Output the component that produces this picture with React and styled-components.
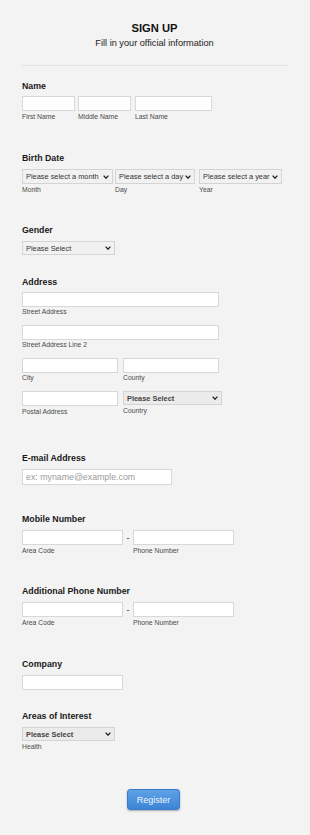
import React from "react";
import styled, { createGlobalStyle } from "styled-components";

const GlobalStyle = createGlobalStyle`
  html, body {
    margin: 0;
    padding: 0;
    background: #f3f3f3;
  }
  body {
    font-family: "Liberation Sans", Arial, sans-serif;
    color: #222;
  }
`;

const Page = styled.div`
  width: 310px;
  min-height: 835px;
  box-sizing: border-box;
  padding: 0 23px 0 22px;
  background: #f3f3f3;
`;

const Header = styled.div`
  display: flex;
  flex-direction: column;
  align-items: center;
  padding-top: 21px;
`;

const Title = styled.div`
  font-size: 11.2px;
  line-height: 14px;
  font-weight: bold;
  color: #111;
`;

const Subtitle = styled.div`
  margin-top: 2px;
  font-size: 9.2px;
  line-height: 12px;
  color: #222;
`;

const Divider = styled.div`
  margin-top: 16px;
  height: 1px;
  background: #e2e2e2;
`;

const Section = styled.div`
  margin-top: ${(p) => p.gap}px;
  display: flex;
  flex-direction: column;
  align-items: flex-start;
`;

const Heading = styled.div`
  font-size: 8.8px;
  line-height: 12px;
  font-weight: bold;
  color: #1a1a1a;
  margin-bottom: ${(p) => (p.mb !== undefined ? p.mb : 4)}px;
`;

const Row = styled.div`
  display: flex;
  align-items: flex-start;
  gap: ${(p) => p.gap || 0}px;
  margin-bottom: ${(p) => p.mb || 0}px;
`;

const Field = styled.div`
  display: flex;
  flex-direction: column;
  width: ${(p) => p.w}px;
`;

const Input = styled.input`
  display: block;
  box-sizing: border-box;
  width: ${(p) => p.w}px;
  height: ${(p) => p.h || 15}px;
  margin: 0;
  padding: 0 3px;
  border: 1px solid #d8d8d8;
  border-radius: 0;
  background: #fff;
  font-family: "Liberation Sans", Arial, sans-serif;
  font-size: 8.8px;
  color: #333;
  outline: none;
  &::placeholder {
    color: #9a9a9a;
  }
`;

const SelectWrap = styled.div`
  position: relative;
  width: ${(p) => p.w}px;
  height: ${(p) => p.h || 15}px;
`;

const Select = styled.select`
  display: block;
  appearance: none;
  -webkit-appearance: none;
  box-sizing: border-box;
  width: 100%;
  height: 100%;
  margin: 0;
  padding: 0 10px 0 3px;
  border: 1px solid #d4d4d4;
  border-radius: 0;
  background-color: ${(p) => (p.dark ? "#ebebeb" : "#f1f1f1")};
  font-family: "Liberation Sans", Arial, sans-serif;
  font-size: 7.4px;
  line-height: normal;
  font-weight: ${(p) => (p.dark ? "bold" : "normal")};
  color: ${(p) => (p.dark ? "#444" : "#333")};
  outline: none;
`;

const Chevron = styled.svg`
  position: absolute;
  right: 4px;
  top: 50%;
  margin-top: -2px;
  width: 6px;
  height: 4px;
  pointer-events: none;
`;

const Sub = styled.div`
  margin-top: ${(p) => (p.mt !== undefined ? p.mt : 1)}px;
  font-size: 6.8px;
  line-height: 9px;
  color: #4a4a4a;
  white-space: nowrap;
`;

const Spacer = styled.div`
  width: ${(p) => p.w}px;
  flex: none;
`;

const Dash = styled.div`
  width: 10px;
  height: 15px;
  display: flex;
  align-items: center;
  justify-content: center;
  font-size: 9px;
  color: #333;
`;

const ButtonRow = styled.div`
  display: flex;
  justify-content: center;
  margin-top: 38px;
  padding-right: 2px;
`;

const Button = styled.button`
  width: 53px;
  height: 21px;
  padding: 0;
  border: 1px solid #3a7cc8;
  border-radius: 3px;
  background: linear-gradient(#5ea2e6, #3c84d6);
  box-shadow: 0 1px 2px rgba(0, 0, 0, 0.3);
  color: #eef5fd;
  font-family: "Liberation Sans", Arial, sans-serif;
  font-size: 9px;
  cursor: pointer;
`;

const Fld = ({ w, h, label, placeholder, mt }) => (
  <Field w={w}>
    <Input w={w} h={h} placeholder={placeholder} />
    {label && <Sub mt={mt}>{label}</Sub>}
  </Field>
);

const Sel = ({ w, h, label, text, dark, mt }) => (
  <Field w={w}>
    <SelectWrap w={w} h={h}>
      <Select dark={dark} defaultValue="">
        <option value="">{text}</option>
      </Select>
      <Chevron viewBox="0 0 6 4">
        <path d="M0.6 0.6 L3 3.2 L5.4 0.6" fill="none" stroke="#222" strokeWidth="1.3" />
      </Chevron>
    </SelectWrap>
    {label && <Sub mt={mt}>{label}</Sub>}
  </Field>
);

export default function App() {
  return (
    <Page>
      <GlobalStyle />
      <Header>
        <Title>SIGN UP</Title>
        <Subtitle>Fill in your official information</Subtitle>
      </Header>
      <Divider />

      <Section gap={14}>
        <Heading>Name</Heading>
        <Row>
          <Fld w={53} label="First Name" />
          <Spacer w={3} />
          <Fld w={53} label="Middle Name" />
          <Spacer w={4} />
          <Fld w={77} label="Last Name" />
        </Row>
      </Section>

      <Section gap={31}>
        <Heading mb={5}>Birth Date</Heading>
        <Row>
          <Sel w={91} text="Please select a month" label="Month" />
          <Spacer w={2} />
          <Sel w={80} text="Please select a day" label="Day" />
          <Spacer w={4} />
          <Sel w={83} text="Please select a year" label="Year" />
        </Row>
      </Section>

      <Section gap={30}>
        <Heading mb={5}>Gender</Heading>
        <Sel w={93} h={14} text="Please Select" />
      </Section>

      <Section gap={21}>
        <Heading mb={4}>Address</Heading>
        <Row mb={9}>
          <Fld w={197} label="Street Address" mt={0} />
        </Row>
        <Row mb={9}>
          <Fld w={197} label="Street Address Line 2" mt={0} />
        </Row>
        <Row gap={5} mb={9}>
          <Fld w={96} label="City" mt={0} />
          <Fld w={96} label="County" mt={0} />
        </Row>
        <Row gap={5}>
          <Fld w={96} label="Postal Address" mt={1} />
          <Sel w={99} h={14} dark text="Please Select" label="Country" mt={1} />
        </Row>
      </Section>

      <Section gap={36}>
        <Heading mb={5}>E-mail Address</Heading>
        <Fld w={150} h={16} placeholder="ex: myname@example.com" />
      </Section>

      <Section gap={28}>
        <Heading mb={5}>Mobile Number</Heading>
        <Row>
          <Fld w={101} label="Area Code" />
          <Dash>-</Dash>
          <Fld w={101} label="Phone Number" />
        </Row>
      </Section>

      <Section gap={30}>
        <Heading mb={5}>Additional Phone Number</Heading>
        <Row>
          <Fld w={101} label="Area Code" />
          <Dash>-</Dash>
          <Fld w={101} label="Phone Number" />
        </Row>
      </Section>

      <Section gap={31}>
        <Heading mb={5}>Company</Heading>
        <Fld w={101} />
      </Section>

      <Section gap={20}>
        <Heading mb={5}>Areas of Interest</Heading>
        <Sel w={93} h={14} dark text="Please Select" label="Health" />
      </Section>

      <ButtonRow>
        <Button>Register</Button>
      </ButtonRow>
    </Page>
  );
}
